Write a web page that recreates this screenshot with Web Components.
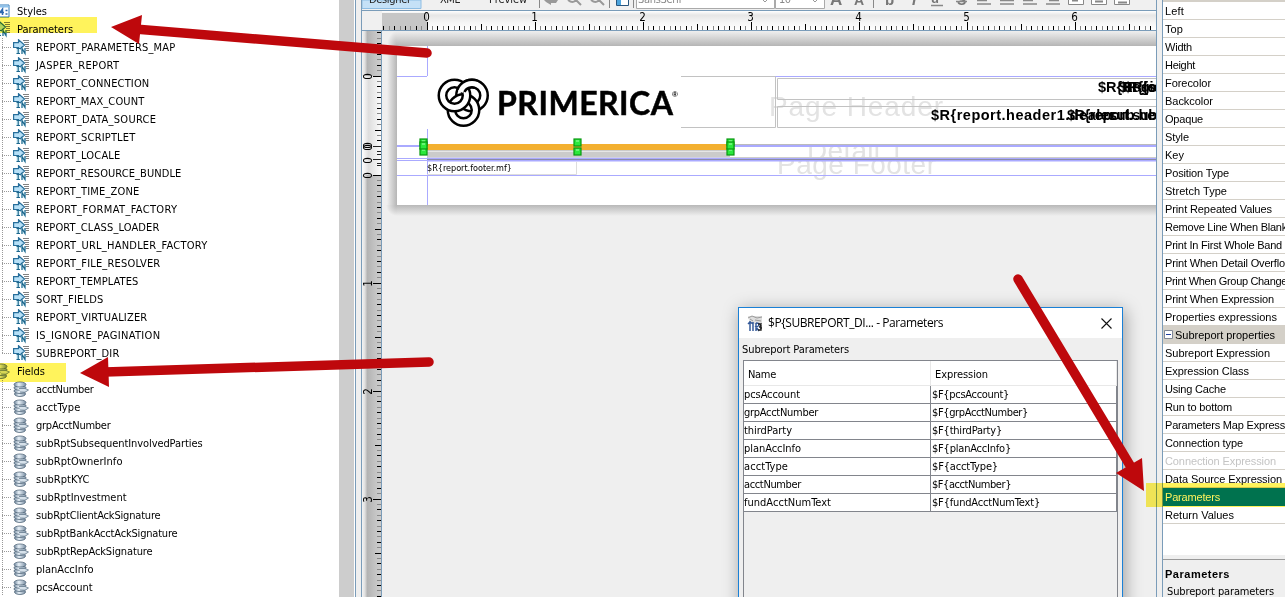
<!DOCTYPE html>
<html lang="en"><head><meta charset="utf-8"><title>Report designer</title>
<style>html,body{margin:0;height:100%;overflow:hidden;background:#eee}</style></head>
<body><report-app></report-app>
<script>
const UI = '"DejaVu Sans Condensed","DejaVu Sans",Tahoma,sans-serif';
const define = (name, build, after) => customElements.define(name, class extends HTMLElement {
  connectedCallback() {
    if (this.shadowRoot) return;
    this.attachShadow({mode: 'open'}).innerHTML = build(this);
    if (after) after(this);
  }
});

// A single line of text tracked to a given width (attribute w).
define('fit-text', () => `<style>:host{display:inline-block;white-space:nowrap}span{display:inline-block}</style><span><slot></slot></span>`, el => {
  const w = +el.getAttribute('w'), s = el.shadowRoot.querySelector('span');
  if (w) s.style.letterSpacing = ((w - s.getBoundingClientRect().width) / el.textContent.length) + 'px';
});

const paramIcon = `<svg width="17" height="17" viewBox="0 0 17 17"><path d="M10 1.500h6M11 3.500h5M12 5.500h4M12 7.500h4M12 9.500h4M12 11.500h4" stroke="#808080"/><path d="M.6 3.600h4.900V.7l6 5.300-6 5.300V8.500H.6z" fill="#b7e0f7" stroke="#286f9b" stroke-width="1.200"/><path d="M3 9.500h4v5.500H3zM8 9.500h5v5.500H8z" fill="#e0f5fb"/><path d="M3.500 9.500h3.500M5.200 9.500v5M3.500 14.500h3.500M9 15v-5.500l3 5v-5.500" fill="none" stroke="#1c668c" stroke-width="1.200"/></svg>`;
const fieldIcon = `<svg width="17" height="17" viewBox="0 0 17 17"><defs><linearGradient id="g"><stop stop-color="#70879d"/><stop offset=".4" stop-color="#e8f1f8"/><stop offset="1" stop-color="#788da2"/></linearGradient></defs><g fill="url(#g)" stroke="#53687b" stroke-width=".8"><ellipse cx="7" cy="13" rx="5.500" ry="2.500"/><ellipse cx="7" cy="10" rx="6" ry="2.500"/><ellipse cx="7" cy="6.800" rx="6" ry="2.500"/><ellipse cx="7" cy="3.500" rx="6" ry="2.500"/></g><path d="M6 7.500h6l3.500 1.500-3.500 2.200-5-.2" fill="#d6e1ea" stroke="#667b8e" stroke-width=".8"/></svg>`;
const stylesIcon = `<svg width="17" height="17" viewBox="0 0 17 17"><path d="M0 2h15v12H0z" fill="#fff" stroke="#2f78b8"/><path d="M0 3.500h14.500" stroke="#8fc3ec" stroke-width="2"/><path d="M8.500 12V6L6 9.500h4M11.500 7.500h2M11.500 11h2" stroke="#2d68ae" fill="none" stroke-width="1.500"/></svg>`;

define('tree-row', el => {
  const icon = {param: paramIcon, field: fieldIcon, styles: stylesIcon}[el.getAttribute('icon')];
  const root = el.hasAttribute('root');
  return `<style>:host{display:flex;height:18px;align-items:center}
  .b{width:${root ? 0 : 13}px;height:18px;flex:none;box-sizing:border-box;${root ? '' : 'background:repeating-linear-gradient(90deg,#999 0 1px,transparent 1px 2px) 2px 9px/9px 1px no-repeat,repeating-linear-gradient(#999 0 1px,transparent 1px 2px) 2px 0/1px ' + (el.hasAttribute('last') ? 10 : 18) + 'px no-repeat'}}
  .i{width:17px;height:17px;flex:none;margin-left:${root ? -6 : 0}px;margin-right:6px}svg{display:block}</style>
  <div class="b"></div><div class="i">${icon}</div><fit-text w="${el.getAttribute('w')}"><slot></slot>${el.dataset.t}</fit-text>`;
});

const params = {REPORT_PARAMETERS_MAP:175,JASPER_REPORT:119,REPORT_CONNECTION:149,REPORT_MAX_COUNT:144,REPORT_DATA_SOURCE:156,REPORT_SCRIPTLET:135,REPORT_LOCALE:120,REPORT_RESOURCE_BUNDLE:181,REPORT_TIME_ZONE:139,REPORT_FORMAT_FACTORY:177,REPORT_CLASS_LOADER:159,REPORT_URL_HANDLER_FACTORY:207,REPORT_FILE_RESOLVER:160,REPORT_TEMPLATES:138,SORT_FIELDS:103,REPORT_VIRTUALIZER:147,IS_IGNORE_PAGINATION:160,SUBREPORT_DIR:119};
const fields = {acctNumber:93,acctType:80,grpAcctNumber:110,subRptSubsequentInvolvedParties:202,subRptOwnerInfo:122,subRptKYC:89,subRptInvestment:126,subRptClientAckSignature:160,subRptBankAcctAckSignature:177,subRptRepAckSignature:152,planAccInfo:93,pcsAccount:92};
const row = (icon, t, w, extra = '') => `<tree-row icon="${icon}" data-t="${t}" w="${w}" ${extra}></tree-row>`;

define('report-tree', () => `<style>:host{display:flex;width:355px;flex:none;background:#fff;font:11px ${UI};color:#000}
.l{flex:1;padding-top:2px;overflow:hidden}.s{width:15px;background:#cdcdcd;margin-right:1px}</style>
<div class="l">${row('styles','Styles',30,'root')}${row('param','Parameters',56,'root')}
${Object.entries(params).map(([t,x]) => row('param', t, x - 35.6, t === 'SUBREPORT_DIR' ? 'last' : '')).join('')}
${row('field','Fields',28,'root')}${Object.entries(fields).map(([t,x]) => row('field', t, x - 35.5)).join('')}</div><div class="s"></div>`);

define('tool-bar', () => `<style>:host{display:block;height:10px;background:#f0f0f0;border-bottom:1px solid #7a9cb9;overflow:hidden}svg{display:block}text{font:11px ${UI}}</style>
<svg width="794" height="10" viewBox="362 0 794 10"><path d="M362 0h59v8.500h-59z" fill="#c5e1f7" stroke="#8ebde3"/>
<g fill="#222"><text x="369" y="3" textLength="42">Designer</text><text x="440" y="3" textLength="20">XML</text><text x="489" y="3" textLength="38">Preview</text></g>
<path d="M539.500 0v8M609.500 0v8M633.500 0v8M873.500 0v8" stroke="#888"/>
<path d="M544 0h14l-2 3h-5v2l-5-3z" fill="#999"/><path d="M568 0q5 4 8 0l5 5M591 0q5 4 8 0l5 5" stroke="#999" stroke-width="2" fill="none"/>
<path d="M616.500 -2h12v7.500h-12z" fill="#fff" stroke="#28557d"/><path d="M617 0h4v5h-4z" fill="#4ba3dc"/>
<path d="M636.500 -3h138v11.500h-138zM775.500 -3h49v11.500h-49z" fill="#fff" stroke="#aaa"/>
<g fill="#888"><text x="638" y="3" textLength="44">SansSerif</text><text x="779" y="3" textLength="12">10</text></g>
<path d="M762 -1l3 3 3-3M812 -1l3 3 3-3" stroke="#999" fill="none"/>
<g fill="#777" font-weight="bold"><text x="830" y="5" style="font:bold 17px 'Liberation Sans'">A</text><text x="854" y="5" style="font:bold 14px 'Liberation Sans'">A</text><text x="885" y="5" style="font:bold 15px 'Liberation Sans'">b</text><text x="912" y="5" style="font:italic bold 15px 'Liberation Sans'">I</text><text x="931" y="3" style="font:bold 13px 'Liberation Sans'">u</text><text x="957" y="5" style="font:bold 14px 'Liberation Sans'">S</text></g>
<path d="M931 5.500h12M956 1.500h11M977 .5h10M977 4h14M1000 .5h14M1000 4h14M1023 .5h10M1023 4h14M1049 .5h10M1046 4h14" stroke="#888" stroke-width="1.500"/>
<path d="M1068.500 -3h15v7.500h-15zM1091.500 -3h15v7.500h-15zM1114.500 -3h15v7.500h-15z" fill="#fff" stroke="#888"/><path d="M1072 .5h6M1095 1.500h8M1118 2.500h9" stroke="#888" stroke-width="2"/></svg>`);

define('h-ruler', () => {
  let t = '';
  for (let i = -8; i < 136; i++) {
    const x = Math.floor(427 + i * 5.4) + .5, h = i % 20 === 0 ? 8 : i % 10 === 0 ? 6 : 4;
    t += `<path d="M${x} 30v-${h}" stroke="${i % 2 ? '#888' : '#000'}"/>`;
    if (i % 20 === 0) t += `<text x="${x - 1}" y="21" text-anchor="middle">${i / 20}</text>`;
  }
  return `<style>:host{display:block;height:19px;padding-left:20px;border-bottom:1px solid #7a9cb9;background:#f0f0f0}svg{display:block}text{font:11.500px ${UI};fill:#000}</style>
  <svg width="774" height="19" viewBox="382 11 774 19"><defs><linearGradient id="h" x2="0" y2="1"><stop stop-color="#fff"/><stop offset=".22" stop-color="#e6e6e6"/><stop offset=".6" stop-color="#f5f5f5"/><stop offset="1" stop-color="#fff"/></linearGradient></defs><path d="M382 11h774v19H382z" fill="url(#h)"/><path d="M382 13h45v17h-45z" fill="#c6c6c6"/>${t}</svg>`;
});

define('v-ruler', () => {
  let t = '';
  const ticks = (o, a, b) => { for (let i = a; i < b; i++) {
    const y = Math.floor(o + i * 5.4) + .5, w = i % 20 === 0 ? 8 : i % 10 === 0 ? 6 : 4;
    t += `<path d="M381 ${y}h-${w}" stroke="${i % 2 ? '#888' : '#000'}"/>`; } };
  ticks(76, -8, 13); ticks(175, 0, 79);
  t += '<path d="M373 146.500h8M373 159.500h8M377 151.500h4M377 154.500h4M377 163.500h4M377 165.500h4" stroke="#222"/>';
  [[76,0],[145,0],[147,0],[160,0],[175,0],[283,1],[391,2],[499,3]].forEach(([y,n]) => t += `<text transform="translate(372 ${y + .5}) rotate(-90)" text-anchor="middle">${n}</text>`);
  return `<style>:host{display:block;width:19px;flex:none;border-right:1px solid #7a9cb9}svg{display:block}text{font:11.500px ${UI};fill:#000}</style>
  <svg width="19" height="566" viewBox="362 31 19 566"><defs><linearGradient id="v"><stop stop-color="#f3f3f3"/><stop offset=".15" stop-color="#e0e0e0"/><stop offset=".28" stop-color="#b3b3b3"/><stop offset=".75" stop-color="#c6c6c6"/><stop offset="1" stop-color="#cbcbcb"/></linearGradient><linearGradient id="w"><stop stop-color="#fff"/><stop offset=".35" stop-color="#dedede"/><stop offset="1" stop-color="#fbfbfb"/></linearGradient></defs>
  <path d="M362 31h19v566h-19z" fill="url(#v)"/><path d="M362 76h19v99h-19z" fill="url(#w)"/>${t}</svg>`;
});

define('design-canvas', () => {
  const handle = (x, y) => `<rect x="${x}" y="${y}" width="7" height="7" fill="#2be83c" stroke="#08980f" stroke-width="1.200"/><path d="M${x + 2} ${y + 2}h3" stroke="#a8ffac"/>`;
  return `<style>:host{display:block;flex:1;overflow:hidden;background:#efefef}svg{display:block}
  .w{font:28px "Liberation Sans",Arial,sans-serif;fill:#e3e3e3}.b{font:bold 14.500px "Liberation Sans",Arial,sans-serif;fill:#000}</style>
  <svg width="774" height="566" viewBox="382 31 774 566"><defs>
  <linearGradient id="t" x2="0" y2="1"><stop stop-color="#efefef"/><stop offset=".3" stop-color="#dedede"/><stop offset="1" stop-color="#b5b5b5"/></linearGradient>
  <linearGradient id="l"><stop stop-color="#efefef"/><stop offset="1" stop-color="#b5b5b5"/></linearGradient>
  <linearGradient id="d" x2="0" y2="1"><stop stop-color="#b8b8b8"/><stop offset="1" stop-color="#efefef"/></linearGradient>
  <radialGradient id="c" cx="1" cy="0" r="1"><stop stop-color="#b5b5b5"/><stop offset="1" stop-color="#efefef"/></radialGradient>
  <radialGradient id="e" cx="1" cy="1" r="1"><stop stop-color="#b5b5b5"/><stop offset="1" stop-color="#efefef"/></radialGradient>
  <clipPath id="cd"><path d="M780 147h200v11H780z"/></clipPath><clipPath id="cf"><path d="M770 161h200v20H770z"/></clipPath></defs>
  <path d="M397 31h760v15H397z" fill="url(#t)"/><path d="M387 46h10v159h-10z" fill="url(#l)"/><path d="M387 31h10v15h-10z" fill="url(#e)"/><path d="M397 205h760v11H397z" fill="url(#d)"/><path d="M386 205h11v11h-11z" fill="url(#c)"/>
  <path d="M397 46h760v159H397z" fill="#fff"/>
  <text class="w" x="769" y="116" textLength="174">Page Header</text>
  <g clip-path="url(#cd)"><text class="w" x="807" y="160" textLength="97">Detail 1</text></g>
  <g clip-path="url(#cf)"><text class="w" x="777" y="174" textLength="159">Page Footer</text></g>
  <path d="M427.500 46v30M427.500 129v76M397 76.500h30M775 76.500h382M397 175.500h760M397 158.500h30M397 160.500h30" stroke="#aaf" fill="none"/>
  <path d="M397 146h30M730 146h427" stroke="#aaf" stroke-width="2"/><path d="M734 144.500h423" stroke="#bbb"/>
  <path d="M427 159.500h730" stroke="#aaf" stroke-width="4"/><path d="M427 159.500h730" stroke="#8b8ba8"/><path d="M730 157.500h427" stroke="#ccc"/>
  <path d="M681 76.500h94M681 127.500h94.500v-51M1157 78.500H777.500v21H1157M1157 106.500H777.500v21H1157" fill="none" stroke="#c2c2c2"/><path d="M427 174.500h149.500V162" fill="none" stroke="#ddd"/>
  <path d="M427 144h303v6H427z" fill="#f3b030"/><path d="M427 150h303v7.500H427z" fill="#cbcbcb"/><path d="M427 151.500h303" stroke="#e6e6e6"/>
  ${handle(420,139)}${handle(420,148)}${handle(420,142)}${handle(574,139)}${handle(574,148)}${handle(727,139)}${handle(727,148)}${handle(727,142)}
  <text x="427" y="171" textLength="85" style="font:9px ${UI.replace(/"/g, "'")}">$R{report.footer.mf}</text>
  <g fill="none"><g stroke="#000" stroke-width="10"><circle cx="472" cy="95.500" r="12"/></g><circle cx="472" cy="95.500" r="12" stroke="#fff" stroke-width="5"/>
  <circle cx="463.500" cy="110" r="12" stroke="#000" stroke-width="10"/><circle cx="463.500" cy="110" r="12" stroke="#fff" stroke-width="5"/>
  <circle cx="454.500" cy="95.500" r="12" stroke="#000" stroke-width="10"/><circle cx="454.500" cy="95.500" r="12" stroke="#fff" stroke-width="5"/>
  <path d="M461 90.500A12 12 0 0 1 476 84.200" stroke="#000" stroke-width="10"/><path d="M460.500 92A12 12 0 0 1 477 84.600" stroke="#fff" stroke-width="5"/></g>
  <text x="497" y="114.500" textLength="176" stroke="#000" stroke-width=".5" style="font:700 32px Lato,sans-serif">PRIMERICA</text><text x="672" y="97" style="font:bold 8px 'Liberation Sans'">®</text>
  <text class="b" x="1098" y="92">$R{Region</text><text class="b" x="1119" y="92">$R{logo</text><text class="b" x="1124" y="92">$R{sign</text>
  <text class="b" x="931" y="120" textLength="184">$R{report.header1.dealer</text><text class="b" x="1067" y="120" textLength="106">$R{report.subhe</text><text class="b" x="1095" y="120">ersub.he</text></svg>`;
});

const props = [['Left',1184],['Top',1183],['Width',1192],['Height',1195],['Forecolor',1211],['Backcolor',1213],['Opaque',1203],['Style',1189],['Key',1184],['Position Type',1229],['Stretch Type',1227],['Print Repeated Values',1272],['Remove Line When Blank',1287],['Print In First Whole Band',1282],['Print When Detail Overflo',1285],['Print When Group Change',1287],['Print When Expression',1274],['Properties expressions',1277],['Subreport properties',1275,'group'],['Subreport Expression',1270],['Expression Class',1249],['Using Cache',1226],['Run to bottom',1232],['Parameters Map Express',1285],['Connection type',1243],['Connection Expression',1276,'off'],['Data Source Expression',1282],['Parameters',1220,'sel'],['Return Values',1234]];
define('prop-row', el => `<style>:host{display:flex;align-items:center;box-sizing:border-box;height:18px;border-bottom:1px solid #d4d0c8;padding-left:2px;overflow:hidden}
:host([kind=group]){background:#d4d0c8}:host([kind=off]){color:#c4c4c4}:host([kind=sel]){background:#0078d7;color:#fff;border-color:#0078d7}
svg{margin-right:2px;flex:none;margin-left:-1px}</style>${el.getAttribute('kind') === 'group' ? '<svg width="9" height="9"><path d="M.5 .5h8v8h-8z" fill="#fff" stroke="#808896"/><path d="M2 4.500h5" stroke="#2140a0"/></svg>' : ''}<slot></slot>`);
define('property-sheet', () => `<style>:host{display:flex;flex-direction:column;flex:1;min-width:0;background:#fff;border-left:1px solid #7a9cb9;font:11px "Liberation Sans",Arial,sans-serif;color:#000;overflow:hidden}
.top{height:2px;background:#d4d0c8;flex:none}.d{margin-top:auto;height:38px;background:#efefef;border-top:1px solid #999;box-shadow:0 -4px #efefef;display:flex;flex-direction:column;box-sizing:border-box;padding:8px 0 0 2px;flex:none}b{height:14px;display:block}.d>fit-text{margin:5px 0 0 2px;font-family:${UI}}.rows{height:522px}</style>
<div class="top"></div><div class="rows">${props.map(([t,x,k]) => `<prop-row kind="${k || ''}"><fit-text w="${x - (k === 'group' ? 1175 : 1165)}">${t}</fit-text></prop-row>`).join('')}</div>
<div class="d"><b><fit-text w="65">Parameters</fit-text></b><fit-text w="107">Subreport parameters</fit-text></div>`);

const cells = [['pcsAccount',56,77],['grpAcctNumber',74,96],['thirdParty',48,70],['planAccInfo',57,79],['acctType',44,66],['acctNumber',57,79],['fundAcctNumText',87,108]];
define('params-dialog', () => `<style>:host{display:block;box-sizing:border-box;width:385px;height:310px;border:1px solid #1a80d6;background:#efefef;box-shadow:2px 3px 16px rgba(0,0,0,.35);font:11px ${UI};color:#000}
.t{height:30px;background:#fff;display:flex;align-items:center;padding:0 10px 0 8px;font:12px "Open Sans","Noto Sans",sans-serif}.t fit-text{margin:-1px 0 0 4px;flex:1}
.n{height:23px;padding-left:3px;display:flex;align-items:center}
.g{margin:-1px 0 0 4px;width:373px;height:260px;border:1px solid #82858c}
.r{display:grid;grid-template-columns:187px 186px;height:18px;width:373px;background:#fff}.r>div{border-right:1px solid #82858c;border-bottom:1px solid #82858c;display:flex;align-items:center;box-sizing:border-box;height:18px;overflow:hidden;padding-bottom:1px}.r>div+div{padding-left:1px}
.h,.h>div{height:25px}.h>div{border-color:#e8e8e8;padding:2px 0 0 4px}.h>div+div{padding-left:4px}</style>
<div class="t"><svg width="17" height="17" viewBox="0 0 17 17"><path d="M1 1h14v8H3z" fill="#dedede"/><path d="M1 3l4-2 5 2 5-1M8 5l6 1M3 4l3 2" stroke="#999" fill="none"/><path d="M3 6v10M6 7v9M1 9l2-2 3 2M9 8v8M9 8q4 0 3 2t-3 2l3 4" stroke="#365b9a" stroke-width="1.500" fill="none"/><path d="M11 9h3l-1 3h-1M14 10v5h-3M13 13h2" stroke="#222" stroke-width="1.400" fill="none"/></svg><fit-text w="175">$P{SUBREPORT_DI... - Parameters</fit-text><svg width="11" height="11"><path d="M.5 .5l10 10M10.500 .5l-10 10" stroke="#111" stroke-width="1.100"/></svg></div>
<div class="n"><fit-text w="107">Subreport Parameters</fit-text></div>
<div class="g"><div class="r h"><div><fit-text w="28">Name</fit-text></div><div><fit-text w="53">Expression</fit-text></div></div>
${cells.map(([t,a,b]) => `<div class="r"><div><fit-text w="${a}">${t}</fit-text></div><div><fit-text w="${b}">$F{${t}}</fit-text></div></div>`).join('')}</div>`);

define('mark-up', () => `<style>:host{display:block}svg{display:block}</style><svg width="1285" height="597"><g fill="#be080c" stroke="#be080c" stroke-linecap="round"><path d="M427 53L135 29M429 362L105 372M1018 279l113 188" stroke-width="9.500"/><path stroke="none" d="M111 27l31-12-3 29zM80 373l28-16 1 30zM1144 491l-2-33-26 15z"/></g></svg>`);
define('high-light', () => `<style>:host{display:block;background:#fff35c}</style>`);

define('report-app', () => `<style>:host{display:flex;width:1285px;height:597px;position:relative;overflow:hidden;background:#efefef}
.m{width:794px;flex:none;display:flex;flex-direction:column;border-right:1px solid #7a9cb9}.bar{width:5px;flex:none;background:#efefef;border-left:1px solid #7a9cb9;border-right:1px solid #7a9cb9}.c{display:flex;flex:1;min-height:0}.gap{width:5px;flex:none}
params-dialog{position:absolute;left:738px;top:307px}mark-up{position:absolute;left:0;top:0}high-light{position:absolute;mix-blend-mode:multiply}</style>
<report-tree></report-tree><div class="bar"></div><div class="m"><tool-bar></tool-bar><h-ruler></h-ruler><div class="c"><v-ruler></v-ruler><design-canvas></design-canvas></div></div><div class="gap"></div><property-sheet></property-sheet>
<params-dialog></params-dialog>
<high-light style="left:0;top:17px;width:97px;height:16px"></high-light><high-light style="left:0;top:363px;width:66px;height:19px"></high-light><high-light style="left:1146px;top:483px;width:139px;height:24px"></high-light>
<mark-up></mark-up>`);
</script></body></html>
